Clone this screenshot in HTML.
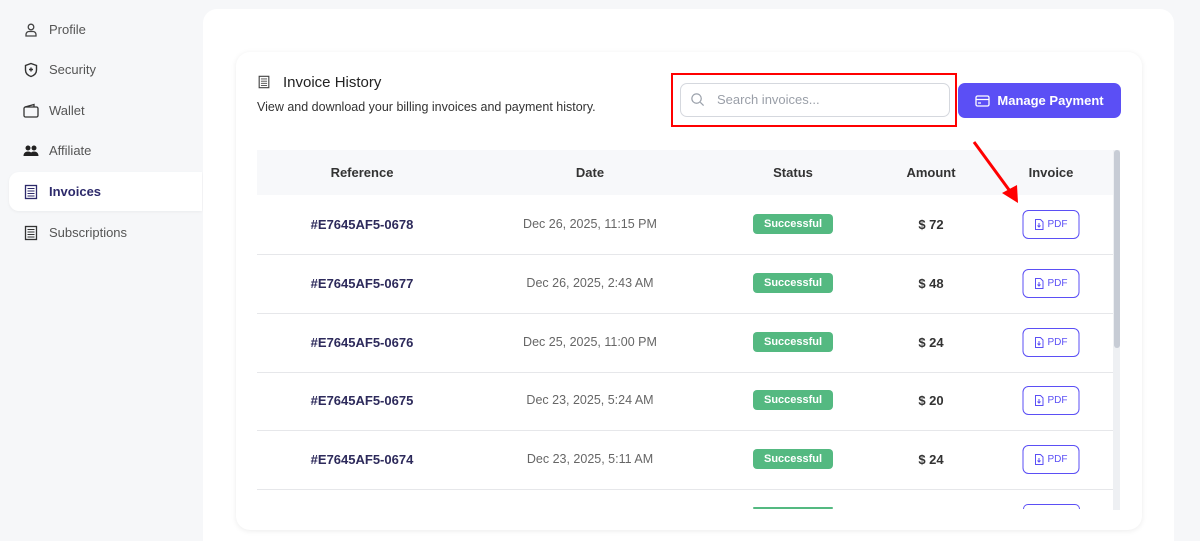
<!DOCTYPE html>
<html style="overflow:hidden;height:541px"><head><style>
*{box-sizing:border-box;margin:0;padding:0}
body{width:1200px;height:541px;background:#f6f7f9;font-family:"Liberation Sans",sans-serif;position:relative;overflow:hidden;color:#333}
.nav{position:absolute;left:9px;width:193px;height:39px;display:flex;align-items:center;padding-left:14px;font-size:13px;color:#555}
.nav svg{width:16px;height:16px;margin-right:10px}
.nav.act{background:#fff;border-radius:10px 0 0 10px;color:#2d2a6b;font-weight:bold;box-shadow:0 1px 3px rgba(0,0,0,.05)}
.panel{position:absolute;left:203px;top:9px;width:971px;height:532px;background:#fff;border-radius:14px 14px 0 0}
.card{position:absolute;left:236px;top:52px;width:906px;height:478px;background:#fff;border-radius:14px;box-shadow:0 1px 6px rgba(0,0,0,.08)}
.abs{position:absolute}
.th{position:absolute;top:150px;height:45px;left:257px;width:856px;background:#f7f8fa}
.c{position:absolute;transform:translateX(-50%);white-space:nowrap}
.hd{font-size:13px;font-weight:bold;color:#333;top:165px}
.line{position:absolute;left:257px;width:856px;height:1px;background:#e6e7ea}
.badge{background:#54b981;color:#fff;font-size:11px;font-weight:bold;padding:4px 11px;border-radius:4px;width:80px;text-align:center}
.pdf{width:57px;height:29px;border:1px solid #5b4ff5;border-radius:6px;color:#5b4ff5;font-size:10px;display:flex;align-items:center;justify-content:center;gap:4px;background:#fff}
</style></head><body>
<div class="nav" style="top:10px"><svg viewBox="0 0 16 16" fill="none" stroke="#444" stroke-width="1.3"><circle cx="8" cy="5" r="2.8"/><path d="M3 14v-1.5a3 3 0 0 1 3-3h4a3 3 0 0 1 3 3V14z"/></svg>Profile</div>
<div class="nav" style="top:50px"><svg viewBox="0 0 16 16" fill="none" stroke="#333" stroke-width="1.4"><path d="M8 1.5l5.5 2v4.5c0 3.5-2.5 5.5-5.5 6.5-3-1-5.5-3-5.5-6.5V3.5z"/><path d="M8 5.5v4M6 7.5h4"/></svg>Security</div>
<div class="nav" style="top:91px"><svg viewBox="0 0 16 16" fill="none" stroke="#333" stroke-width="1.3"><rect x="1" y="4" width="14" height="10" rx="1.5"/><path d="M2 4l9-2.5V4"/></svg>Wallet</div>
<div class="nav" style="top:131px"><svg viewBox="0 0 16 16" fill="#222"><circle cx="5" cy="5" r="2.5"/><circle cx="11" cy="5" r="2.5"/><path d="M0.5 13c0-3 2-4.5 4.5-4.5s4.5 1.5 4.5 4.5zM7 13c0-3 1.5-4.5 4-4.5s4.5 1.5 4.5 4.5z"/></svg>Affiliate</div>
<div class="nav act" style="top:172px"><svg viewBox="0 0 16 16" fill="none" stroke="#2d2a6b" stroke-width="1.3"><rect x="2.5" y="1.5" width="11" height="13"/><path d="M4.5 4.5h7M4.5 7h7M4.5 9.5h7M4.5 12h7" stroke-width="1"/></svg>Invoices</div>
<div class="nav" style="top:213px"><svg viewBox="0 0 16 16" fill="none" stroke="#333" stroke-width="1.3"><rect x="2.5" y="1.5" width="11" height="13"/><path d="M4.5 4.5h7M4.5 7h7M4.5 9.5h7M4.5 12h7" stroke-width="1"/></svg>Subscriptions</div>

<div class="panel"></div>
<div class="card"></div>
<svg class="abs" style="left:257px;top:75px" width="14" height="14" viewBox="0 0 16 16" fill="none" stroke="#444" stroke-width="1.3"><rect x="2.5" y="1.5" width="11" height="13"/><path d="M4.5 4.5h7M4.5 7h7M4.5 9.5h7M4.5 12h7" stroke-width="1"/></svg>
<div class="abs" style="left:283px;top:74px;font-size:15px;color:#222">Invoice History</div>
<div class="abs" style="left:257px;top:100px;font-size:12.5px;color:#333">View and download your billing invoices and payment history.</div>
<div class="abs" style="left:671px;top:73px;width:286px;height:54px;border:2px solid #f00"></div>
<div class="abs" style="left:680px;top:83px;width:270px;height:34px;border:1px solid #d5d8de;border-radius:7px;background:#fff"></div>
<svg class="abs" style="left:690px;top:92px" width="15" height="15" viewBox="0 0 16 16" fill="none" stroke="#9aa0aa" stroke-width="1.3"><circle cx="7" cy="7" r="5"/><path d="M11 11l3.5 3.5"/></svg>
<div class="abs" style="left:717px;top:92px;font-size:13px;color:#9a9fa8">Search invoices...</div>
<div class="abs" style="left:958px;top:83px;width:163px;height:35px;background:#5b4ff5;border-radius:7px;color:#fff;font-size:13px;font-weight:bold;display:flex;align-items:center;justify-content:center;gap:7px"><svg width="15" height="12" viewBox="0 0 15 12" fill="none" stroke="#fff" stroke-width="1.3"><rect x="1" y="1" width="13" height="10" rx="1.5"/><path d="M1 4.5h13M3 8h3"/></svg>Manage Payment</div>

<div class="th"></div>
<div class="abs" style="left:1113px;top:150px;width:7px;height:360px;background:#eef0f3"></div>
<div class="abs" style="left:1114px;top:150px;width:6px;height:198px;background:#c7ccd5;border-radius:3px"></div>
<div class="c hd" style="left:362px">Reference</div>
<div class="c hd" style="left:590px">Date</div>
<div class="c hd" style="left:793px">Status</div>
<div class="c hd" style="left:931px">Amount</div>
<div class="c hd" style="left:1051px">Invoice</div>

<svg class="abs" style="left:965px;top:135px" width="60" height="75"><path d="M9 7L50 63" stroke="#f00" stroke-width="3"/><path d="M53 68L37 58L52 50z" fill="#f00"/></svg>

<div id="rows"></div>
<script>
var d=[["0678","Dec 26, 2025, 11:15 PM","72"],["0677","Dec 26, 2025, 2:43 AM","48"],["0676","Dec 25, 2025, 11:00 PM","24"],["0675","Dec 23, 2025, 5:24 AM","20"],["0674","Dec 23, 2025, 5:11 AM","24"]];
var h="";
d.forEach(function(r,i){var y=225+i*58.8;
h+='<div class="c" style="left:362px;top:'+(y-8)+'px;font-size:13px;font-weight:bold;color:#2d2a5b">#E7645AF5-'+r[0]+'</div>';
h+='<div class="c" style="left:590px;top:'+(y-8)+'px;font-size:12.5px;color:#666">'+r[1]+'</div>';
h+='<div class="c badge" style="left:793px;top:'+(y-11)+'px">Successful</div>';
h+='<div class="c" style="left:931px;top:'+(y-8)+'px;font-size:13px;font-weight:bold;color:#333">$ '+r[2]+'</div>';
h+='<div class="c pdf" style="left:1051px;top:'+(y-15)+'px"><svg width="9" height="11" viewBox="0 0 9 11" fill="none" stroke="#5b4ff5" stroke-width="1"><path d="M1 .5h5l2.5 2.5v7.5H1z M4.5 4v4M3 6.5l1.5 1.5 1.5-1.5"/></svg>PDF</div>';
h+='<div class="line" style="top:'+(y+29)+'px"></div>';
});
h+='<div class="c badge" style="left:793px;top:507px;height:2px;padding:0;overflow:hidden"></div>';
h+='<div class="abs" style="left:1023px;top:504px;width:57px;height:5px;border:1px solid #5b4ff5;border-bottom:none;border-radius:6px 6px 0 0"></div>';
document.getElementById("rows").innerHTML=h;
</script>
</body></html>
